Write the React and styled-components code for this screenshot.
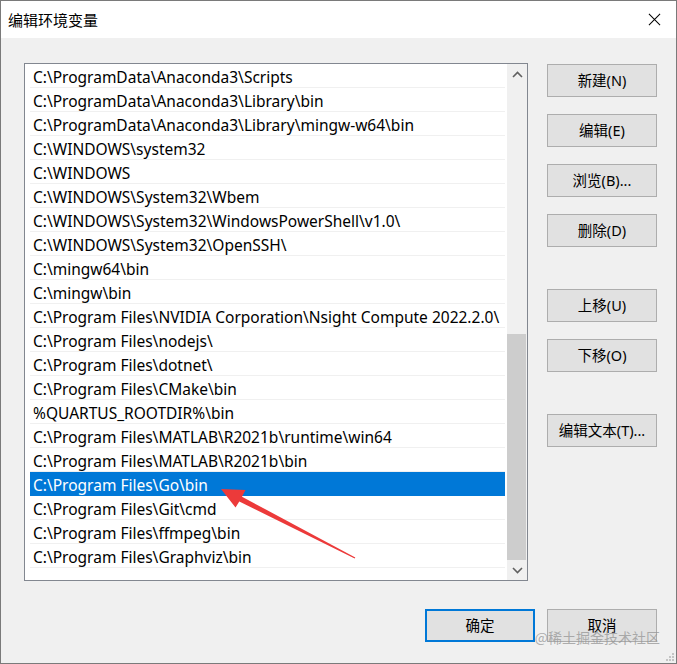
import React from 'react'
import styled, { createGlobalStyle } from 'styled-components'

const paths = [
  'C:\\ProgramData\\Anaconda3\\Scripts',
  'C:\\ProgramData\\Anaconda3\\Library\\bin',
  'C:\\ProgramData\\Anaconda3\\Library\\mingw-w64\\bin',
  'C:\\WINDOWS\\system32',
  'C:\\WINDOWS',
  'C:\\WINDOWS\\System32\\Wbem',
  'C:\\WINDOWS\\System32\\WindowsPowerShell\\v1.0\\',
  'C:\\WINDOWS\\System32\\OpenSSH\\',
  'C:\\mingw64\\bin',
  'C:\\mingw\\bin',
  'C:\\Program Files\\NVIDIA Corporation\\Nsight Compute 2022.2.0\\',
  'C:\\Program Files\\nodejs\\',
  'C:\\Program Files\\dotnet\\',
  'C:\\Program Files\\CMake\\bin',
  '%QUARTUS_ROOTDIR%\\bin',
  'C:\\Program Files\\MATLAB\\R2021b\\runtime\\win64',
  'C:\\Program Files\\MATLAB\\R2021b\\bin',
  'C:\\Program Files\\Go\\bin',
  'C:\\Program Files\\Git\\cmd',
  'C:\\Program Files\\ffmpeg\\bin',
  'C:\\Program Files\\Graphviz\\bin',
]

const SELECTED = 17

const App = () => {
  return (
    <>
      <GlobalStyle />
      <Window>
        <TitleBar>
          <Title>编辑环境变量</Title>
          <CloseIcon viewBox="0 0 14 14">
            <path d="M1 1 L13 13 M13 1 L1 13" stroke="#000" strokeWidth="1.1" />
          </CloseIcon>
        </TitleBar>

        <Body>
          <Main>
            <ListBox>
              <Rows>
                {paths.map((p, i) => (
                  <Row key={i} $selected={i === SELECTED}>
                    {p}
                  </Row>
                ))}
              </Rows>
              <ScrollBar>
                <ScrollArrow>
                  <svg width="11" height="7" viewBox="0 0 11 7">
                    <polyline points="1,6 5.5,1.5 10,6" fill="none" stroke="#606060" strokeWidth="1.6" />
                  </svg>
                </ScrollArrow>
                <Track>
                  <Thumb />
                </Track>
                <ScrollArrow>
                  <svg width="11" height="7" viewBox="0 0 11 7">
                    <polyline points="1,1 5.5,5.5 10,1" fill="none" stroke="#606060" strokeWidth="1.6" />
                  </svg>
                </ScrollArrow>
              </ScrollBar>
            </ListBox>

            <ButtonColumn>
              <Button>新建(N)</Button>
              <Button>编辑(E)</Button>
              <Button>浏览(B)...</Button>
              <Button>删除(D)</Button>
              <Button $spaced>上移(U)</Button>
              <Button>下移(O)</Button>
              <Button $spaced>编辑文本(T)...</Button>
            </ButtonColumn>
          </Main>

          <Footer>
            <Button $default>确定</Button>
            <Button>取消</Button>
          </Footer>
        </Body>

        <Watermark>@稀土掘金技术社区</Watermark>
        <Grip viewBox="0 0 10 10">
          <rect x="7" y="1" width="2" height="2" fill="#c4c4c4" />
          <rect x="4" y="4" width="2" height="2" fill="#c4c4c4" />
          <rect x="7" y="4" width="2" height="2" fill="#c4c4c4" />
          <rect x="1" y="7" width="2" height="2" fill="#c4c4c4" />
          <rect x="4" y="7" width="2" height="2" fill="#c4c4c4" />
          <rect x="7" y="7" width="2" height="2" fill="#c4c4c4" />
        </Grip>

        <Arrow viewBox="0 0 677 664">
          <polygon
            points="221,489 245.5,490 242,496.7 355.3,557.5 354.7,558.5 239.3,501.5 235.5,507.5"
            fill="#ec3a3a"
          />
        </Arrow>
      </Window>
    </>
  )
}

export default App

const GlobalStyle = createGlobalStyle`
  body {
    margin: 0;
    font-family: "Noto Sans", "Noto Sans CJK SC", sans-serif;
  }
`

const Window = styled.div`
  position: relative;
  box-sizing: border-box;
  width: 677px;
  height: 664px;
  border: 1px solid #7a7a7a;
  background: #f0f0f0;
  display: flex;
  flex-direction: column;
  overflow: hidden;
`

const TitleBar = styled.div`
  height: 37px;
  background: #ffffff;
  display: flex;
  align-items: center;
  justify-content: space-between;
  padding: 0 15px 0 7px;
`

const Title = styled.span`
  font-family: "Noto Sans CJK SC", sans-serif;
  font-size: 15px;
  color: #000;
  margin-top: -1px;
`

const CloseIcon = styled.svg`
  width: 13px;
  height: 13px;
`

const Body = styled.div`
  flex: 1;
  display: flex;
  flex-direction: column;
  padding: 25px 19px 0 23px;
`

const Main = styled.div`
  display: flex;
  gap: 19px;
`

const ListBox = styled.div`
  box-sizing: border-box;
  width: 504px;
  height: 518px;
  border: 1px solid #828790;
  background: #ffffff;
  display: flex;
`

const Rows = styled.div`
  flex: 1;
  padding: 0 2px 0 5px;
`

const Row = styled.div`
  box-sizing: border-box;
  height: 24px;
  line-height: 26px;
  padding-left: 3px;
  font-size: 15.5px;
  white-space: nowrap;
  overflow: hidden;
  color: ${(p) => (p.$selected ? '#ffffff' : '#000000')};
  background: ${(p) => (p.$selected ? '#0078d7' : 'transparent')};
  border-bottom: 1px solid ${(p) => (p.$selected ? '#0078d7' : '#f0f0f0')};
`

const ScrollBar = styled.div`
  width: 20px;
  background: #f0f0f0;
  display: flex;
  flex-direction: column;
`

const ScrollArrow = styled.div`
  height: 20px;
  display: flex;
  align-items: center;
  justify-content: center;
`

const Track = styled.div`
  flex: 1;
  display: flex;
  flex-direction: column;
  justify-content: flex-end;
  padding: 0 1px 0 0;
`

const Thumb = styled.div`
  height: 226px;
  background: #cdcdcd;
`

const ButtonColumn = styled.div`
  display: flex;
  flex-direction: column;
  gap: 17px;
  padding-top: 1px;
`

const Button = styled.button`
  box-sizing: border-box;
  width: 110px;
  height: 33px;
  margin-top: ${(p) => (p.$spaced ? '25px' : '0')};
  border: ${(p) => (p.$default ? '2px solid #0078d7' : '1px solid #adadad')};
  background: #e1e1e1;
  font-family: "Noto Sans", "Noto Sans CJK SC", sans-serif;
  font-size: 14.5px;
  color: #000;
  padding: 0 0 2px;
`

const Footer = styled.div`
  display: flex;
  justify-content: flex-end;
  gap: 12px;
  margin-top: 28px;
`

const Watermark = styled.span`
  position: absolute;
  right: 16px;
  bottom: 16px;
  font-family: "Noto Sans CJK SC", sans-serif;
  font-size: 14px;
  color: rgba(150, 150, 150, 0.75);
  pointer-events: none;
`

const Grip = styled.svg`
  position: absolute;
  right: 1px;
  bottom: 1px;
  width: 10px;
  height: 10px;
`

const Arrow = styled.svg`
  position: absolute;
  left: -1px;
  top: -1px;
  width: 677px;
  height: 664px;
  pointer-events: none;
`
